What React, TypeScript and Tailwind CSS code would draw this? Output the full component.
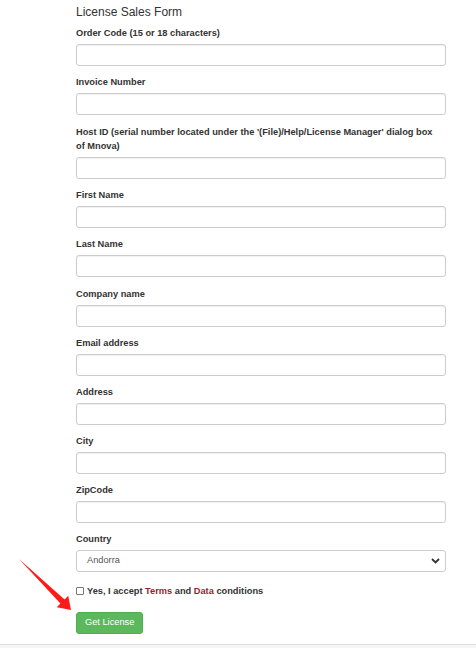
const fields = [
  "Order Code (15 or 18 characters)",
  "Invoice Number",
  "Host ID (serial number located under the '(File)/Help/License Manager' dialog box of Mnova)",
  "First Name",
  "Last Name",
  "Company name",
  "Email address",
  "Address",
  "City",
  "ZipCode",
];

function Field({ label, gap }: { label: string; gap: string }) {
  return (
    <div className={gap}>
      <label className="block max-w-[362px] text-[9.25px] font-bold leading-[14px] text-[#333]">{label}</label>
      <input
        type="text"
        className="mt-[4px] block h-[22px] w-full rounded-[3px] border border-[#ccc] bg-white shadow-[inset_0_1px_1px_rgba(0,0,0,0.06)] outline-none"
      />
    </div>
  );
}

export default function App() {
  return (
    <div className="relative flex h-[648px] w-[476px] flex-col overflow-hidden bg-white font-['Liberation_Sans',Arial,sans-serif]">
      <div className="w-[446px] pl-[76px] pt-[4px]">
        <h1 className="text-[12px] leading-[16px] font-normal text-[#333]">License Sales Form</h1>

        {fields.map((f, i) => (
          <Field
            key={f}
            label={f}
            gap={i === 0 ? "mt-[6px]" : i === 2 || i === 5 ? "mt-[10px]" : "mt-[9px]"}
          />
        ))}

        <div className="mt-[9px]">
          <label className="block text-[9.25px] font-bold leading-[14px] text-[#333]">Country</label>
          <div className="relative mt-[4px] flex h-[22px] w-full items-center rounded-[3px] border border-[#ccc] bg-white pl-[10px] text-[9.25px] text-[#555]">
            Andorra
            <svg
              className="absolute right-[5px] top-[7px]"
              width="9"
              height="6"
              viewBox="0 0 9 6"
              fill="none"
            >
              <path d="M1 1 L4.5 4.5 L8 1" stroke="#333" strokeWidth="1.8" />
            </svg>
          </div>
        </div>

        <div className="mt-[12px] flex items-center gap-[3px] text-[9.25px] font-bold leading-[14px] text-[#333]">
          <span className="inline-block h-[8px] w-[8px] rounded-[1px] border border-[#777] bg-white" />
          <span>
            Yes, I accept <span className="text-[#9a1f33]">Terms</span> and{" "}
            <span className="text-[#9a1f33]">Data</span> conditions
          </span>
        </div>

        <button className="mt-[14px] h-[22px] rounded-[3px] border border-[#4cae4c] bg-[#5cb85c] px-[8px] text-[9.25px] text-white">
          Get License
        </button>
      </div>

      <div className="mt-auto h-[4px] border-t border-[#ddd] bg-[#f6f6f6]" />

      <svg className="absolute left-0 top-0" width="476" height="648" viewBox="0 0 476 648">
        <polygon
          points="19,559 64.6,599.4 68.2,595.8 71,610 56.8,607.2 60.4,603.6"
          fill="#ff1a1a"
        />
      </svg>
    </div>
  );
}
